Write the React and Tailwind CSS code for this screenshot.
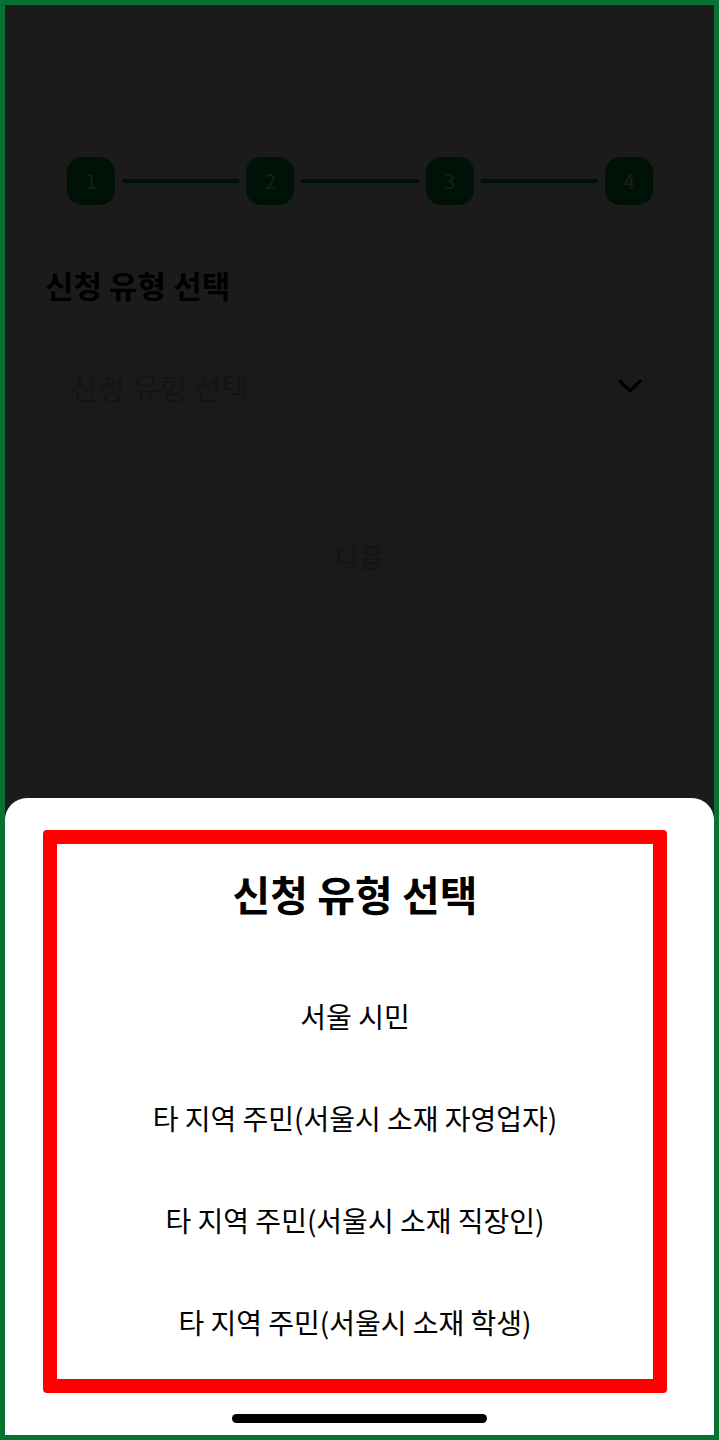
const font = { fontFamily: '"Noto Sans CJK KR", "Noto Sans", sans-serif' };

const options = [
  '서울 시민',
  '타 지역 주민(서울시 소재 자영업자)',
  '타 지역 주민(서울시 소재 직장인)',
  '타 지역 주민(서울시 소재 학생)',
];

function Stepper() {
  const steps = [1, 2, 3, 4];
  return (
    <div className="flex items-center pl-[62px] pr-[61px] pt-[65px]">
      {steps.map((n, i) => (
        <div key={n} className={i < steps.length - 1 ? 'flex flex-1 items-center' : 'flex items-center'}>
          <div className="flex h-[48px] w-[48px] items-center justify-center rounded-[15px] bg-[#00a84f] text-[20px] text-white">
            {n}
          </div>
          {i < steps.length - 1 && <div className="mx-[7px] h-[4px] flex-1 bg-[#00a84f]" />}
        </div>
      ))}
    </div>
  );
}

export default function App() {
  return (
    <div
      className="relative h-[1440px] w-[719px] overflow-hidden border-[5px] border-[#067230] bg-white"
      style={font}
    >
      {/* underlying page */}
      <div className="h-[87px] border-b border-[#e9e9e9] bg-[#fbfbfb]" />
      <Stepper />
      <div className="px-[37px]">
        <h2 className="mt-[60px] pl-[3px] text-[31px] font-bold leading-[40px] text-black">신청 유형 선택</h2>
        <div className="mt-[32px] flex h-[98px] items-center justify-between rounded-[14px] bg-[#f6f6f6] pl-[28px] pr-[34px] shadow-[0_2px_8px_rgba(0,0,0,0.06)]">
          <span className="text-[30px] text-[#bdbdbd]">신청 유형 선택</span>
          <svg width="26" height="16" viewBox="0 0 26 16" fill="none">
            <path d="M3 3l10 10L23 3" stroke="#000" strokeWidth="3.2" strokeLinecap="round" strokeLinejoin="round" />
          </svg>
        </div>
        <button className="mt-[74px] flex h-[94px] w-full items-center justify-center rounded-[14px] bg-[#eeeeee] text-[26px] text-[#bcbcbc]">
          다음
        </button>
      </div>

      {/* dim overlay */}
      <div className="absolute inset-0 bg-black/[0.894]" />

      {/* bottom sheet */}
      <div className="absolute bottom-0 left-0 right-0 h-[637px] rounded-t-[22px] bg-white pt-[32px]">
        <div className="ml-[38px] w-[624px] rounded-[4px] border-[14px] border-[#ff0000] pb-[6px] pt-[23px]">
          <h3 className="text-center text-[41px] font-bold leading-[52px] text-black">신청 유형 선택</h3>
          <ul className="mt-[46px]">
            {options.map((o) => (
              <li key={o} className="flex h-[102px] items-center justify-center text-[28px] text-black">
                {o}
              </li>
            ))}
          </ul>
        </div>
        <div className="mt-[21px] flex justify-center">
          <div className="h-[9px] w-[255px] rounded-full bg-black" />
        </div>
      </div>
    </div>
  );
}
